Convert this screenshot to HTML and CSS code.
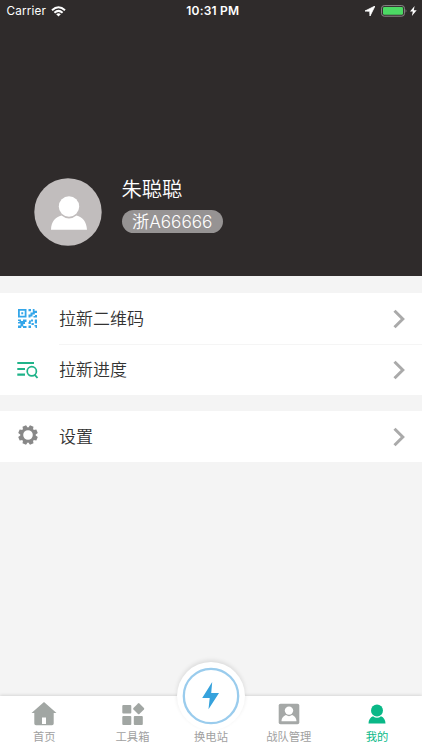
FILE: index.html
```html
<!DOCTYPE html>
<html lang="zh-CN">
<head>
<meta charset="utf-8">
<title>我的</title>
<link rel="stylesheet" href="styles.css">
</head>
<body>
<div class="app">
  <header class="header">
    <div class="status">
      <div class="status-left">
        <span>Carrier</span>
        <svg width="15" height="11" viewBox="0 0 15 11" fill="none" stroke="#fff" stroke-width="2"><path d="M1 4.200Q7.500-1.800 14 4.200M3.400 6.700Q7.500 3.100 11.600 6.700"/><path d="M7.500 10.500L5.200 8.200Q7.500 6.400 9.800 8.200Z" fill="#fff" stroke="none"/></svg>
      </div>
      <span class="time">10:31 PM</span>
      <div class="status-right">
        <svg width="10" height="10" viewBox="0 0 10 10"><path d="M10 0L0 5L4.700 5.300L5 10Z" fill="#fff" stroke="#fff" stroke-width=".8"/></svg>
        <svg width="27" height="12" viewBox="0 0 27 12"><rect x=".6" y=".6" width="22.800" height="10.600" rx="2.600" fill="none" stroke="#8b8888"/><rect x="2" y="2" width="20" height="7.800" rx="1.300" fill="#4cd964"/><path d="M24.600 4Q26.400 5.900 24.600 7.800Z" fill="#8b8888"/></svg>
        <svg width="7" height="10" viewBox="0 0 7 10"><path d="M4.600 0L0 5.600H2.800L1.900 10L6.700 4.200H3.800Z" fill="#fff"/></svg>
      </div>
    </div>
    <div class="profile">
      <svg class="avatar" width="68" height="68" viewBox="0 0 68 68"><circle cx="34" cy="34" r="33.700" fill="#c1bdbd"/><circle cx="35" cy="28.500" r="10.200" fill="#fff"/><path d="M17 51.700C17.200 43.500 21.500 39 27.500 37.500Q35 43.500 42.500 37.500C48.500 39 52.500 43.500 53 51.700Z" fill="#fff"/></svg>
      <div class="identity">
        <div class="name">朱聪聪</div>
        <div class="plate">浙A66666</div>
      </div>
    </div>
  </header>

  <main class="content">
    <section class="group">
      <div class="row">
        <svg class="row-icon" width="22" height="22" viewBox="0 0 22 22" fill="#34a6e9"><path fill-rule="evenodd" d="M1 1H9.500V9.500H1ZM2.800 2.800V7.700H7.700V2.800ZM4.300 4.300H6.200V6.200H4.300Z"/><path d="M11.500 1H14V3.200H11.500ZM15.800 1H17.500V2.800H20V5H17.800V6.500H15.500V8.500H13.500V9.500H11.500V6.500H13.500V4.500H15.800ZM18 7H20V9.500H16.500V8H18ZM1 11.500H4V13H6V11.500H9.500V14H8V16H6.300V18H9.500V20H6V18.500H4.200V20H1V17.500H3.500V15.500H1V14H2.500V13H1ZM12 12.500H14V11.500H16V13.500H13.800V16H11.500V14H12ZM17.800 11.500H20V15.500H17.800ZM14.500 15H16.800V17H14.500ZM11.500 17.500H14V20H11.500ZM17.500 17H20V20H18.500V18.500H17.500Z"/></svg>
        <span class="label">拉新二维码</span>
        <svg class="chevron" width="14" height="20" viewBox="0 0 14 20"><path d="M2.500 1.700L10.800 10L2.500 18.300"/></svg>
      </div>
      <div class="row divided">
        <svg class="row-icon" width="22" height="22" viewBox="0 0 22 22" fill="none" stroke="#1fb389" stroke-width="2.200"><path d="M.3 4H17M.3 10H8M.3 15.700H8"/><circle cx="14.800" cy="12.300" r="4.600" stroke-width="1.700"/><path d="M17.800 15.800L20.500 19" stroke-width="1.900"/></svg>
        <span class="label">拉新进度</span>
        <svg class="chevron" width="14" height="20" viewBox="0 0 14 20"><path d="M2.500 1.700L10.800 10L2.500 18.300"/></svg>
      </div>
    </section>
    <section class="group">
      <div class="row">
        <svg class="row-icon gear" width="22" height="22" viewBox="-11 -11 22 22"><circle r="6.300" fill="none" stroke="#888" stroke-width="3"/><g fill="#888" transform="rotate(22.500)"><path id="tooth" d="M-2.500-7L-1.900-9.800H1.900L2.500-7Z"/><use href="#tooth" transform="rotate(45)"/><use href="#tooth" transform="rotate(90)"/><use href="#tooth" transform="rotate(135)"/><use href="#tooth" transform="rotate(180)"/><use href="#tooth" transform="rotate(225)"/><use href="#tooth" transform="rotate(270)"/><use href="#tooth" transform="rotate(315)"/></g></svg>
        <span class="label">设置</span>
        <svg class="chevron" width="14" height="20" viewBox="0 0 14 20"><path d="M2.500 1.700L10.800 10L2.500 18.300"/></svg>
      </div>
    </section>
  </main>

  <nav class="tabs">
    <div class="tab">
      <svg width="26" height="24" viewBox="0 0 26 24"><path fill="#a1a6a3" fill-rule="evenodd" d="M13 0L25.500 11H22.700V21.500Q22.700 23.200 21 23.200H5Q3.300 23.200 3.300 21.500V11H.5ZM11 15.500V22H15V15.500Z"/></svg>
      <span>首页</span>
    </div>
    <div class="tab">
      <svg width="24" height="24" viewBox="0 0 24 24" fill="#a1a6a3"><rect x="1.300" y="3" width="9" height="8.500" rx="1"/><rect x="1.300" y="14" width="9" height="9" rx="1"/><rect x="12.800" y="14" width="9" height="9" rx="1"/><rect x="13.500" y="2.500" width="8.400" height="8.400" rx="1" transform="rotate(45 17.700 6.700)"/></svg>
      <span>工具箱</span>
    </div>
    <div class="tab">
      <span>换电站</span>
      <div class="swap">
        <svg width="58" height="58" viewBox="0 0 58 58"><circle cx="29" cy="29" r="27.200" fill="#fff" stroke="#9acced" stroke-width="2.300"/><path d="M30.200 15L20.200 31H27.700L26.500 42.200L37 26H29.200Z" fill="#36a2dc"/></svg>
      </div>
    </div>
    <div class="tab">
      <svg width="22" height="24" viewBox="0 0 22 24"><rect x=".7" y="1.700" width="20.600" height="20.600" rx="1.800" fill="#a5a8a7"/><circle cx="11" cy="8.600" r="4.200" fill="#fff"/><path d="M3.500 19.200C3.500 15.500 6.300 13.600 8 13Q11 15.300 14 13C15.700 13.600 18.500 15.500 18.500 19.200Z" fill="#fff"/></svg>
      <span>战队管理</span>
    </div>
    <div class="tab active">
      <svg width="20" height="24" viewBox="0 0 20 24" fill="#09b887"><circle cx="10" cy="8.500" r="6"/><path d="M1.500 21.500C1.500 17.800 3.300 15.300 6 14.200Q10 17.300 14 14.200C16.700 15.300 18.500 17.800 18.500 21.500Z"/></svg>
      <span>我的</span>
    </div>
  </nav>
</div>
</body>
</html>
```
FILE: styles.css
```css
* { box-sizing: border-box; }
body { margin: 0; font-family: Inter, "Noto Sans CJK SC", sans-serif; }
svg { display: block; flex: none; }
.app {
  width: 422px;
  height: 750px;
  display: flex;
  flex-direction: column;
  background: #f4f4f4;
  overflow: hidden;
}
.header { height: 276px; flex: none; background: #2f2b2b; color: #fff; }
.status {
  height: 22px;
  padding: 0 5px 0 6.500px;
  display: grid;
  grid-template-columns: 1fr auto 1fr;
  align-items: center;
  font-size: 11.700px;
  letter-spacing: .2px;
}
.status-left { display: flex; align-items: center; gap: 5px; }
.status-right { display: flex; align-items: center; justify-content: flex-end; gap: 6px; }
.status-right svg:last-child { margin-left: -4px; }
.time { position: relative; left: 1px; font-weight: 600; font-size: 12px; line-height: 14px; padding-bottom: 1px; }
.profile { display: flex; align-items: flex-start; gap: 20px; padding: 156px 0 0 33.500px; }
.name { height: 32px; margin-top: -2px; font-size: 20.300px; line-height: 28px; font-weight: 350; }
.plate {
  height: 23px;
  margin-top: 2px;
  padding: 0 10.500px;
  border-radius: 12px;
  background: #969393;
  font-size: 17.200px;
  line-height: 24px;
  font-weight: 350;
}
.content { flex: 1; padding-top: 17px; }
.group { margin-bottom: 16px; background: #fff; }
.row { height: 51px; display: flex; align-items: center; padding: 0 16px 0 17px; position: relative; }
.row-icon { margin-right: 20px; }
.gear { margin-top: -3px; }
.label { flex: 1; padding-bottom: 2px; font-size: 17px; color: #333; font-weight: 350; }
.chevron { fill: none; stroke: #aaa; stroke-width: 3; }
.divided::before { content: ""; position: absolute; left: 59px; right: 0; top: 0; height: 1px; background: #f5f5f5; }
.tabs {
  height: 54px;
  flex: none;
  display: grid;
  grid-template-columns: 88.500px 88px 69px 86.500px 90px;
  background: #fff;
  box-shadow: 0 -1px 3px rgba(0, 0, 0, .12);
  position: relative;
}
.tab {
  display: flex;
  flex-direction: column;
  align-items: center;
  justify-content: flex-end;
  gap: 4px;
  padding-bottom: 5px;
  font-size: 11.300px;
  line-height: 15px;
  color: #a1a1a1;
  position: relative;
}
.swap {
  position: absolute;
  left: 50%;
  top: -34px;
  width: 68px;
  height: 68px;
  margin-left: -34px;
  padding: 5px;
  border-radius: 50%;
  background: #fff;
  box-shadow: 0 -2px 4px rgba(0, 0, 0, .1);
}
.active { color: #09b887; }
```
